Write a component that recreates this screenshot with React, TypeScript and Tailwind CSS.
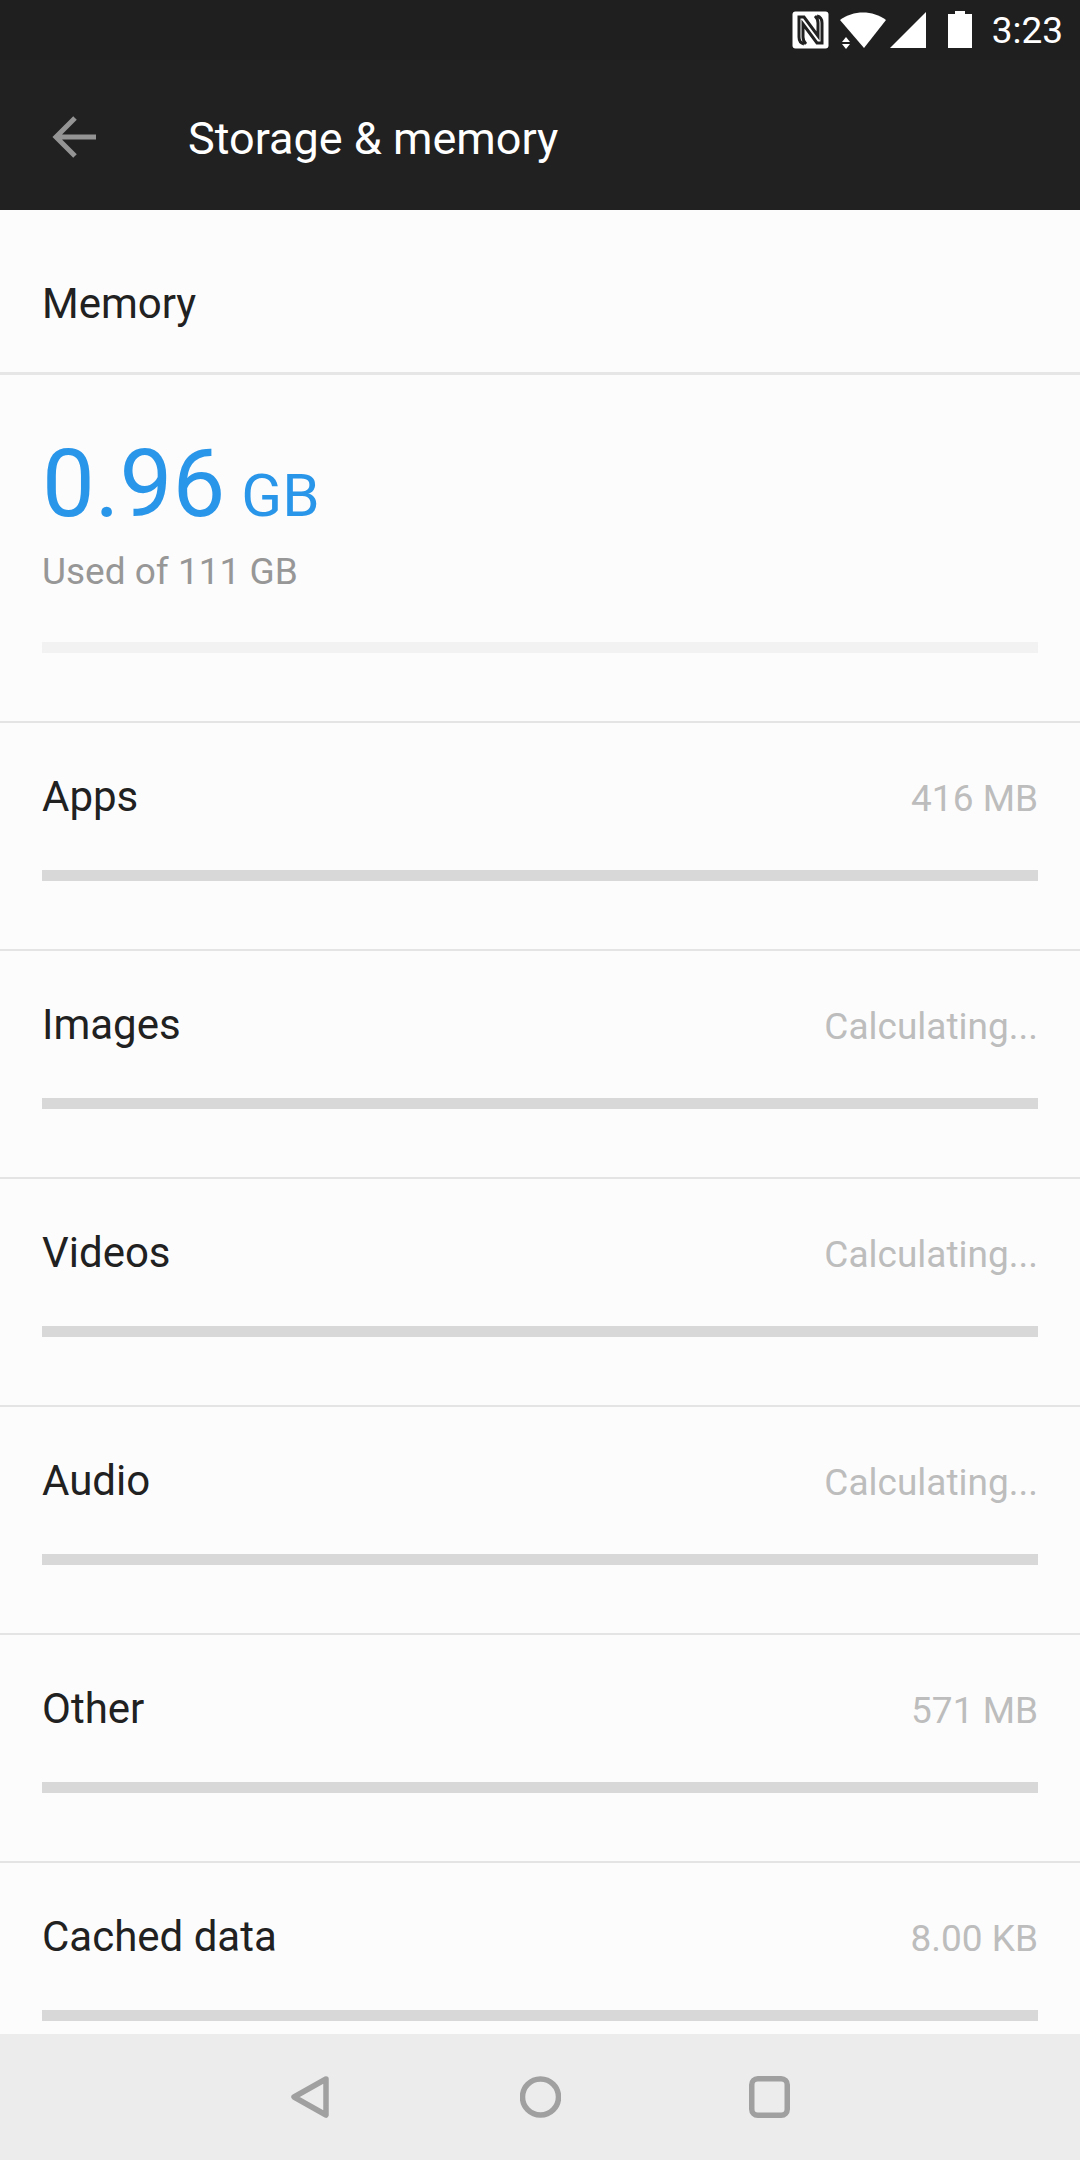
const rows = [
    { name: 'Apps', value: '416 MB' },
    { name: 'Images', value: 'Calculating...' },
    { name: 'Videos', value: 'Calculating...' },
    { name: 'Audio', value: 'Calculating...' },
    { name: 'Other', value: '571 MB' },
    { name: 'Cached data', value: '8.00 KB' },
];

function StatusIcons() {
    return (
        <div className="flex items-center">
            <svg width="37" height="38" viewBox="0 0 37 38" className="mr-[11px]">
                <rect x="0.5" y="0.5" width="36" height="37" rx="3" fill="#fff" />
                <path d="M12 33 C8 32 7 29 7 26 V6 H12 L26 25 V12 C26 9 25 7 23 5 M25 5 C29 6 30 9 30 12 V32 H25 L11 13 V26 C11 29 12 31 14 33" fill="none" stroke="#212121" strokeWidth="3" />
            </svg>
            <svg width="47" height="38" viewBox="0 0 47 38" className="mr-[3px]">
                <path d="M0 9 C13 -1 33 -1 46 9 L24 37 Z" fill="#fff" />
                <path d="M2 31 L6 26 L10 31 Z M2 33 H10 L6 38 Z" fill="#fff" />
            </svg>
            <svg width="36" height="36" viewBox="0 0 36 36" className="mr-[22px]">
                <path d="M36 0 V36 H0 Z" fill="#fff" />
            </svg>
            <svg width="24" height="38" viewBox="0 0 24 38" className="mr-[20px]">
                <path d="M7 0 H17 V3 H24 V37 H0 V3 H7 Z" fill="#fff" />
            </svg>
            <span className="mr-[17px] pt-[2px] text-[37px] text-white">3:23</span>
        </div>
    );
}

function UsageRow({ name, value }: { name: string; value: string }) {
    return (
        <div className="h-[228px] shrink-0 border-b-2 border-[#e4e4e4] px-[42px] pt-[48px]">
            <div className="flex h-[50px] items-center justify-between">
                <span className="text-[42px] text-[#212121]">{name}</span>
                <span className="pt-[6px] text-[37px] text-[#bdbdbd]">{value}</span>
            </div>
            <div className="mt-[49px] h-[11px] bg-[#d8d8d8]" />
        </div>
    );
}

export default function App() {
    return (
        <div className="flex h-[2160px] w-[1080px] flex-col overflow-hidden bg-[#fcfcfc] font-['Roboto',sans-serif]">
            <div className="flex h-[60px] shrink-0 items-center justify-end bg-[#1f1f1f]">
                <StatusIcons />
            </div>

            <div className="flex h-[150px] shrink-0 items-center bg-[#212121]">
                <svg width="44" height="42" viewBox="0 0 44 42" className="ml-[52px] mt-[3px]">
                    <path d="M23 2 L4 21 L23 40 M4 21 H44" fill="none" stroke="#949494" strokeWidth="5" />
                </svg>
                <span className="ml-[92px] mt-[8px] text-[45px] text-white">Storage &amp; memory</span>
            </div>

            <div className="min-h-0 flex-1 overflow-hidden">
                <div className="flex h-[165px] items-center border-b-[3px] border-[#e6e6e6] px-[42px] pt-[24px]">
                    <span className="text-[42px] text-[#212121]">Memory</span>
                </div>

                <div className="h-[348px] border-b-2 border-[#e4e4e4] px-[42px] pt-[74px]">
                    <div className="flex h-[70px] items-baseline text-[#2a96ea]">
                        <span className="text-[94px] leading-[70px]">0.96</span>
                        <span className="ml-[16px] text-[60px] leading-[70px]">GB</span>
                    </div>
                    <div className="mt-[33px] text-[37px] leading-[40px] text-[#979797]">Used of 111 GB</div>
                    <div className="mt-[50px] h-[11px] bg-[#f2f2f2]" />
                </div>

                {rows.map((row) => (
                    <UsageRow key={row.name} name={row.name} value={row.value} />
                ))}
            </div>

            <div className="flex h-[126px] shrink-0 items-center justify-center bg-[#ececec]">
                <svg width="38" height="42" viewBox="0 0 38 42" className="mr-[191px]">
                    <path d="M35 3 L3 21 L35 39 Z" fill="none" stroke="#a0a0a0" strokeWidth="5.5" strokeLinejoin="round" />
                </svg>
                <svg width="41" height="42" viewBox="0 0 41 42" className="mr-[188px]">
                    <circle cx="20.5" cy="21" r="18" fill="none" stroke="#a0a0a0" strokeWidth="5.5" />
                </svg>
                <svg width="41" height="42" viewBox="0 0 41 42">
                    <rect x="2.75" y="2.75" width="35.5" height="36.5" rx="6" fill="none" stroke="#a0a0a0" strokeWidth="5.5" />
                </svg>
            </div>
        </div>
    );
}
